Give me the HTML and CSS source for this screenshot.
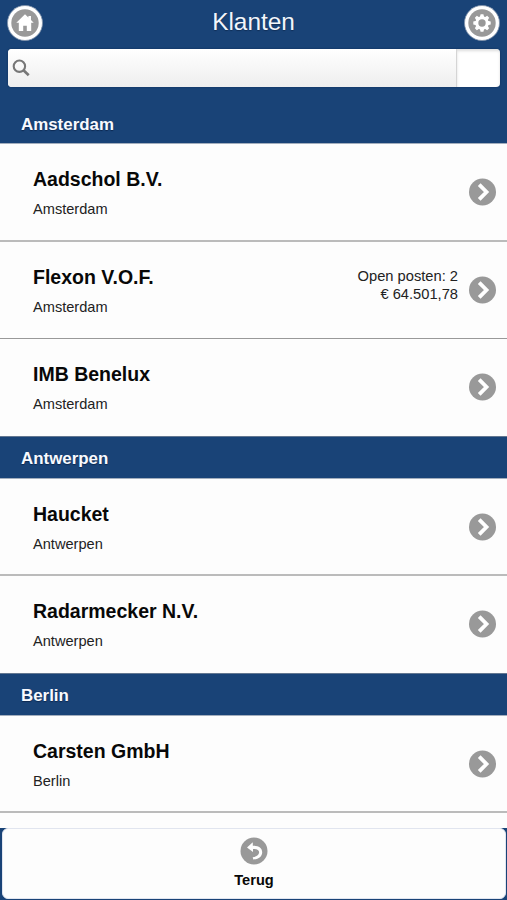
FILE: index.html
```html
<!DOCTYPE html>
<html lang="nl">
<head>
<meta charset="utf-8">
<title>Klanten</title>
<link rel="stylesheet" href="styles.css">
</head>
<body>
<svg class="defs" width="0" height="0" aria-hidden="true">
  <symbol id="chevron" viewBox="0 0 28 28"><circle cx="13.5" cy="14" r="13.5" fill="#999"/><path d="M10.2 6.7 17.5 14l-7.3 7.3" fill="none" stroke="#fff" stroke-width="3.8"/></symbol>
</svg>
<div class="app">
  <header class="header">
    <div class="titlebar">
      <a class="round" aria-label="Home"><svg width="38" height="38" viewBox="0 0 38 38"><circle cx="19" cy="19" r="17.5" fill="#fff" stroke="#8092aa" stroke-width=".8"/><circle cx="19" cy="19" r="13.7" fill="#999"/><path d="M19 10.3 10.3 18.7h2.5v8.2h4.4v-5.2h3.6v5.2h4.4v-8.2h2.5l-2.7-2.6v-4h-2.6v1.5z" fill="#fff"/></svg></a>
      <h1>Klanten</h1>
      <a class="round" aria-label="Instellingen"><svg width="38" height="38" viewBox="0 0 38 38"><circle cx="19" cy="19" r="17.5" fill="#fff" stroke="#8092aa" stroke-width=".8"/><circle cx="19" cy="19" r="13.7" fill="#999"/><g fill="#fff"><circle cx="19" cy="19" r="6.7"/><g id="teeth"><path d="m17.6 10.3h2.8l.8 3h-4.4zM17.6 27.7h2.8l.8-3h-4.4zM10.3 17.6v2.8l3 .8v-4.4zM27.7 17.6v2.8l-3 .8v-4.4z"/></g><use href="#teeth" transform="rotate(45 19 19)"/></g><circle cx="19" cy="19" r="3.7" fill="#999"/></svg></a>
    </div>
    <div class="search">
      <div class="field"><svg width="18" height="18" viewBox="0 0 18 18"><circle cx="7.4" cy="7.2" r="5.7" fill="none" stroke="#777" stroke-width="2.1"/><path d="m11.5 11.3 5.2 4.9" stroke="#777" stroke-width="2.7"/></svg></div>
      <div class="clear"></div>
    </div>
  </header>
  <main class="list">
    <h2 class="first">Amsterdam</h2>
    <section>
      <article class="lead"><div class="client"><h3>Aadschol B.V.</h3><p>Amsterdam</p></div><svg class="go"><use href="#chevron"/></svg></article>
      <article><div class="client"><h3>Flexon V.O.F.</h3><p>Amsterdam</p></div><div class="open">Open posten: 2<br>€ 64.501,78</div><svg class="go"><use href="#chevron"/></svg></article>
      <article><div class="client"><h3>IMB Benelux</h3><p>Amsterdam</p></div><svg class="go"><use href="#chevron"/></svg></article>
    </section>
    <h2>Antwerpen</h2>
    <section>
      <article><div class="client"><h3>Haucket</h3><p>Antwerpen</p></div><svg class="go"><use href="#chevron"/></svg></article>
      <article><div class="client"><h3>Radarmecker N.V.</h3><p>Antwerpen</p></div><svg class="go"><use href="#chevron"/></svg></article>
    </section>
    <h2>Berlin</h2>
    <section>
      <article><div class="client"><h3>Carsten GmbH</h3><p>Berlin</p></div><svg class="go"><use href="#chevron"/></svg></article>
    </section>
  </main>
  <footer>
    <a class="back"><svg width="28" height="28" viewBox="0 0 28 28"><circle cx="14" cy="14" r="13.5" fill="#999"/><path d="M12.8 5.3 7 10.4l6 4.6v-3c4.5-.3 6.3 1.3 6.1 3.6-.2 2.5-2.4 4.2-6.4 4.7l.6 2.3c5.5-.6 8.8-3.4 8.9-7.2.1-4.4-3.7-7-9.4-6.7z" fill="#fff"/></svg><span>Terug</span></a>
  </footer>
</div>
</body>
</html>
```

FILE: styles.css
```css
* { box-sizing: border-box; }
body { margin: 0; font-family: "Liberation Sans", Arial, sans-serif; color: #080808; background: #fdfdfd; }
h1, h2, h3, p { margin: 0; }
.defs { display: block; }
.app { height: 900px; overflow: hidden; display: flex; flex-direction: column; background: #fdfdfd; }
.header { flex: none; height: 104px; background: #194377; }
.titlebar { display: flex; justify-content: space-between; align-items: flex-start; height: 49px; padding: 4px 6px 0; }
.round, .round svg { display: block; width: 38px; height: 38px; }
h1 { color: #f2f6fb; font-size: 24.4px; line-height: 28px; font-weight: 400; margin-top: 4px; text-shadow: 0 1px 1px #102f58; }
.search { display: flex; height: 38px; margin: 0 7px 0 8px; border-radius: 4px; overflow: hidden; background: #fff; box-shadow: 0 0 2px #0d2d57; }
.field { flex: 1; padding: 10px 0 0 4px; background: linear-gradient(#fff, #eee); border-right: 1px solid #d5d5d5; }
.field svg { display: block; }
.clear { width: 43px; box-shadow: inset 0 2px 3px #ddd; }
.list { flex: 1; min-height: 0; overflow: hidden; }
h2 { height: 43px; padding-left: 21px; font-size: 16.9px; line-height: 43px; color: #f8faff; background: #194377; border-top: 1px solid #637791; border-bottom: 1px solid #a3aebd; text-shadow: 0 1px 1px #0c2850; }
h2.first { height: 40px; border-top: 0; line-height: 42px; }
article { display: flex; height: 97px; padding: 0 10px 0 33px; border-bottom: 2px solid #bbb; }
article.lead { height: 98px; }
article:nth-child(2) { border-bottom: 1px solid #999; }
section:first-of-type article:last-child, section:nth-of-type(2) article:last-child { border-bottom: 0; }
.client { flex: 1; }
h3 { margin-top: 24px; font-size: 19.5px; line-height: 22px; }
p { margin-top: 11px; font-size: 14.6px; line-height: 17px; color: #222; }
.open { margin: 25px 11px 0 0; font-size: 14.7px; line-height: 18px; color: #222; text-align: right; }
.go { display: block; width: 28px; height: 28px; margin-top: 34px; }
footer { flex: none; height: 72px; padding: 0 1px 1px 2px; background: #194377; }
.back { display: flex; flex-direction: column; align-items: center; height: 71px; padding: 8px 0 0; border: 1px solid #e1e5ef; border-radius: 6px; background: #fdfdfd; }
.back svg { display: block; }
.back span { margin-top: 7px; font-size: 14.6px; line-height: 17px; font-weight: 700; }
```
